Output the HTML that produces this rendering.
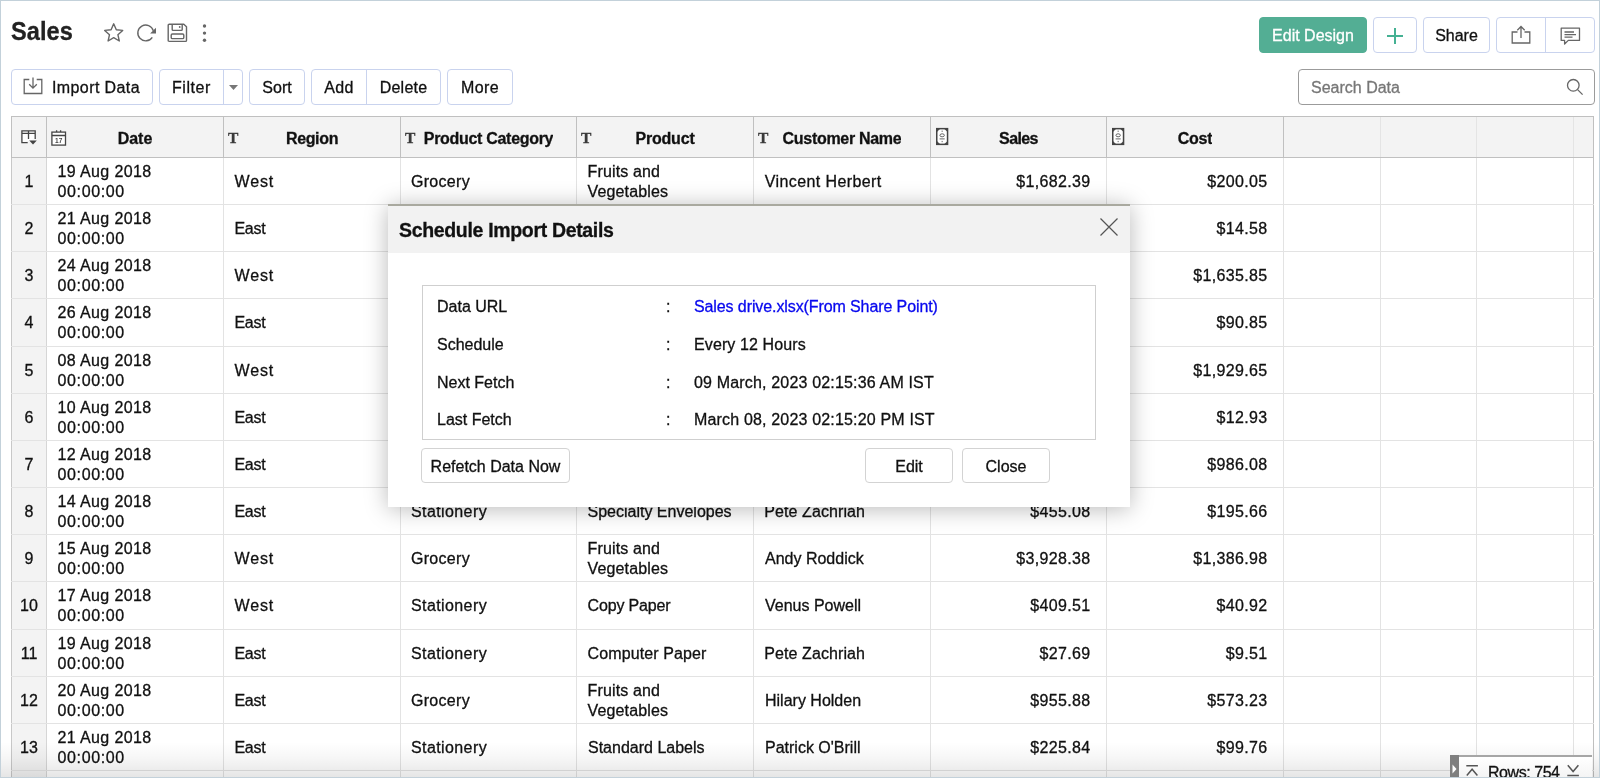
<!DOCTYPE html>
<html lang="en">
<head>
<meta charset="utf-8">
<title>Sales</title>
<style>
*{box-sizing:border-box;margin:0;padding:0}
html,body{width:1600px;height:778px;overflow:hidden;background:#fff}
body{position:relative;will-change:transform;-webkit-text-stroke:.3px;font-family:"Liberation Sans",Arial,sans-serif;font-size:16px;color:#111;line-height:20px}
#frame{position:absolute;left:0;top:0;width:1600px;height:778px;border:1px solid #c3d1da;pointer-events:none;z-index:50}
.abs{position:absolute}
h1{position:absolute;left:11px;top:15px;font-size:26.5px;line-height:32px;font-weight:bold;color:#222;transform:scaleX(.89);transform-origin:1px 0}
.btn{position:absolute;height:36px;border:1px solid #c9d3ee;border-radius:4px;background:#fff;color:#111;font-size:16px;line-height:36px;text-align:center;white-space:nowrap}
.btn.green{background:#53ae94;border-color:#53ae94;color:#fff}
svg{position:absolute;overflow:visible}
#search{position:absolute;left:1298px;top:69px;width:297px;height:36px;border:1px solid #9b9b9b;border-radius:4px;color:#777;line-height:36px;padding-left:12px}
/* table */
#grid{position:absolute;left:11px;top:116px;width:1583px;height:662px;overflow:hidden}
#head{position:absolute;left:0;top:0;width:1583px;height:42px;background:#f3f3f3;border:1px solid #c0c0c0;display:grid;grid-template-columns:35px 177px 177px 176px 177px 177px 176px 177px 97px 96px 97px 19px}
.h{position:relative;height:40px;border-right:1px solid #c0c0c0;font-weight:bold;text-align:center;line-height:40px;white-space:nowrap;overflow:hidden}
.h .t{position:absolute;left:4px;top:1px;font:bold 15.5px/40px "Liberation Serif",serif;color:#3a3a3a;font-style:normal}
.h.e{border-right-color:#e4e4e4}
.h.z{border-right:0}
.h b{display:inline-block;max-width:130px;overflow:hidden;vertical-align:top;padding-top:2px;height:40px}
.row{position:absolute;left:0;width:1583px;display:grid;grid-template-columns:36px 177px 177px 176px 177px 177px 176px 177px 97px 96px 97px 20px;border-bottom:1px solid #e3e3e3}
.c{border-right:1px solid #e3e3e3;padding:1px 16px 0 11px;display:flex;align-items:center;white-space:nowrap;overflow:hidden}
.c.n{background:#f3f3f3;justify-content:center;padding:1px 0 0 0;border-left:1px solid #c8c8c8;border-right-color:#d6d6d6}
.c.r{justify-content:flex-end;letter-spacing:.36px;padding-right:15.4px}
.c.d{white-space:normal;letter-spacing:.36px;padding-left:10.6px}
.c.d u{text-decoration:none;letter-spacing:.6px}
.c.z{border-right-color:#c0c0c0;padding:0}
/* modal */
#modal{position:absolute;left:388px;top:204px;width:742px;height:303px;background:#fff;border-top:2px solid #a9a99f;box-shadow:0 2px 22px rgba(0,0,0,.28);z-index:20}
#mhead{position:absolute;left:0;top:0;width:742px;height:47px;background:#f2f2f2}
#mhead b{position:absolute;left:11px;top:12px;font-size:19.5px;line-height:24px;color:#111;letter-spacing:-.33px}
#mbox{position:absolute;left:34px;top:79px;width:674px;height:155px;border:1px solid #cfcfcf}
.l{position:absolute;left:14px;white-space:nowrap}
.k{position:absolute;left:243px}
.v{position:absolute;left:271px;white-space:nowrap}
.mb{position:absolute;height:35px;border:1px solid #d3d3d3;border-radius:4px;background:#fff;text-align:center;line-height:36px;top:242px;white-space:nowrap}
</style>
</head>
<body>
<h1>Sales</h1>

<!-- title icons -->
<svg style="left:103px;top:22px" width="22" height="22" viewBox="0 0 22 22" fill="none" stroke="#666" stroke-width="1.4" stroke-linejoin="round"><path d="M10.7 1.8l2.6 6 6.4.6-4.8 4.3 1.4 6.3-5.6-3.3-5.6 3.3 1.4-6.3L1.7 8.4l6.4-.6z"/></svg>
<svg style="left:136px;top:23px" width="22" height="20" viewBox="0 0 22 20" fill="none" stroke="#666" stroke-width="1.4"><path d="M17.3 7.7A7.9 7.9 0 1 0 16.3 14.3"/><path d="M20 4.7v5.9h-5.9z" fill="#666" stroke="none"/></svg>
<svg style="left:167px;top:23px" width="21" height="20" viewBox="0 0 21 20" fill="none" stroke="#666" stroke-width="1.4" stroke-linejoin="round"><path d="M2.2 1.2h14.6l2.7 2.6v13.6a1 1 0 0 1-1 1H2.2a1 1 0 0 1-1-1V2.2a1 1 0 0 1 1-1z"/><path d="M5.2 1.4v5.2a.8.8 0 0 0 .8.8h8.4a.8.8 0 0 0 .8-.8V1.4"/><rect x="4.2" y="11" width="12.6" height="4.6" rx="1.2"/><circle cx="12.7" cy="4" r=".9" fill="#666" stroke="none"/></svg>
<svg style="left:201px;top:23px" width="8" height="20" viewBox="0 0 8 20" fill="#666"><circle cx="3.5" cy="3" r="1.7"/><circle cx="3.5" cy="10.1" r="1.7"/><circle cx="3.5" cy="17.2" r="1.7"/></svg>

<!-- top right buttons -->
<div class="btn green" style="left:1259px;top:17px;width:108px">Edit Design</div>
<div class="btn" style="left:1373px;top:17px;width:44px"></div>
<svg style="left:1385px;top:26px" width="20" height="20" viewBox="0 0 20 20" stroke="#45b193" stroke-width="2" fill="none"><path d="M10 2v16M2 10h16"/></svg>
<div class="btn" style="left:1423px;top:17px;width:67px">Share</div>
<div class="btn" style="left:1496px;top:17px;width:99px"></div>
<div class="abs" style="left:1545px;top:18px;width:1px;height:34px;background:#c9d3ee"></div>
<svg style="left:1511px;top:25px" width="20" height="20" viewBox="0 0 20 20" fill="none" stroke="#666" stroke-width="1.3"><path d="M6.5 7H1.2v11h17.6V7h-5.3"/><path d="M10 13V1.5M6.3 5.2L10 1.5l3.7 3.7"/></svg>
<svg style="left:1560px;top:27px" width="21" height="20" viewBox="0 0 21 20" fill="none" stroke="#666" stroke-width="1.3" stroke-linejoin="round"><path d="M1.2 1.2h18.3v12.2H8.3L4.6 17v-3.6H1.2z"/><path d="M4.5 5h9.5M4.5 7.6h11.5M4.5 10.2h8"/></svg>

<!-- toolbar -->
<div class="btn" style="left:11px;top:69px;width:142px;text-align:left;padding-left:40px;letter-spacing:.4px">Import Data</div>
<svg style="left:23px;top:77px" width="20" height="18" viewBox="0 0 20 18" fill="none" stroke="#666" stroke-width="1.3"><path d="M6.3 2.5H1.2v14h17.6v-14h-5.1"/><path d="M10 .5v10.5M6.2 7.3l3.8 3.8 3.8-3.8"/></svg>
<div class="btn" style="left:159px;top:69px;width:84px;text-align:left;padding-left:12px;letter-spacing:.55px">Filter</div>
<div class="abs" style="left:223px;top:70px;width:1px;height:34px;background:#c9d3ee"></div>
<svg style="left:228.5px;top:85px" width="9" height="5" viewBox="0 0 9 5" fill="#777"><path d="M0 0h9L4.5 5z"/></svg>
<div class="btn" style="left:249px;top:69px;width:56px">Sort</div>
<div class="btn" style="left:311px;top:69px;width:130px"></div>
<div class="abs" style="left:366px;top:70px;width:1px;height:34px;background:#c9d3ee"></div>
<div class="abs" style="left:312px;top:70px;width:54px;line-height:36px;text-align:center;letter-spacing:.3px">Add</div>
<div class="abs" style="left:367px;top:70px;width:73px;line-height:36px;text-align:center;letter-spacing:.25px">Delete</div>
<div class="btn" style="left:447px;top:69px;width:66px;letter-spacing:.4px">More</div>
<div id="search">Search Data</div>
<svg style="left:1566px;top:78px" width="18" height="18" viewBox="0 0 18 18" fill="none" stroke="#666" stroke-width="1.3"><circle cx="7.3" cy="7.3" r="5.8"/><path d="M11.6 11.6l5 5"/></svg>

<!-- grid -->
<div id="grid">
<div id="head">
<div class="h"><svg style="left:9px;top:13px" width="17" height="16" viewBox="0 0 17 16" fill="none" stroke="#444" stroke-width="1.3"><path d="M.9 12.7V.9h13.3v8.2M.9 3.3h13.3M7.5.9v8.2M.3 12.7h6.4" fill="#fff"/><path d="M8.2 10.5h7.6l-3.8 4z" fill="#444" stroke="none"/></svg></div>
<div class="h"><svg style="left:4px;top:13px" width="16" height="16" viewBox="0 0 16 16" fill="none" stroke="#444" stroke-width="1.3"><rect x=".9" y="2.1" width="13.6" height="13" fill="#fff"/><path d="M.9 5.5h13.6M5.6.3v1.8M9.6.3v1.8"/><text x="7.7" y="12.8" style="font:bold 6.5px 'Liberation Sans',sans-serif" text-anchor="middle" fill="#444" stroke="none">17</text></svg><b>Date</b></div>
<div class="h"><i class="t">T</i><b style="letter-spacing:-.35px">Region</b></div>
<div class="h"><i class="t">T</i><b style="letter-spacing:-.3px">Product Category</b></div>
<div class="h"><i class="t">T</i><b style="letter-spacing:-.2px">Product</b></div>
<div class="h"><i class="t">T</i><b style="letter-spacing:-.3px">Customer Name</b></div>
<div class="h"><svg style="left:5px;top:11px" width="13" height="17" viewBox="0 0 13 17" fill="none" stroke="#444"><rect x=".75" y=".65" width="10.8" height="15.7" fill="#fff" stroke-width="1.5"/><path d="M.8.7h3L.8 3.7zM11.5.7h-3l3 3zM.8 16.3h3l-3-3zM11.5 16.3h-3l3-3z" fill="#444" stroke-width=".6"/><ellipse cx="6.15" cy="7.3" rx="2.2" ry="1.5" stroke-width=".9" stroke="#555"/><path d="M3.6 10.9h5.1" stroke-width="1" stroke="#666"/><path d="M6.15 2.6v1.3M6.15 12.9v1.3" stroke-width="1" stroke="#666"/></svg><b style="letter-spacing:-.6px">Sales</b></div>
<div class="h"><svg style="left:5px;top:11px" width="13" height="17" viewBox="0 0 13 17" fill="none" stroke="#444"><rect x=".75" y=".65" width="10.8" height="15.7" fill="#fff" stroke-width="1.5"/><path d="M.8.7h3L.8 3.7zM11.5.7h-3l3 3zM.8 16.3h3l-3-3zM11.5 16.3h-3l3-3z" fill="#444" stroke-width=".6"/><ellipse cx="6.15" cy="7.3" rx="2.2" ry="1.5" stroke-width=".9" stroke="#555"/><path d="M3.6 10.9h5.1" stroke-width="1" stroke="#666"/><path d="M6.15 2.6v1.3M6.15 12.9v1.3" stroke-width="1" stroke="#666"/></svg><b style="letter-spacing:-.3px">Cost</b></div>
<div class="h e"></div>
<div class="h e"></div>
<div class="h e"></div>
<div class="h z"></div>
</div>
<div class="row" style="top:42px;height:47px"><div class="c n">1</div><div class="c d"><span>19 Aug 2018<br><u>00:00:00</u></span></div><div class="c"><span style="letter-spacing:0.85px;margin-left:-0.5px">West</span></div><div class="c"><span style="letter-spacing:0.3px;margin-left:-1px">Grocery</span></div><div class="c"><span style="letter-spacing:0.15px;margin-left:-0.5px">Fruits and<br>Vegetables</span></div><div class="c"><span style="letter-spacing:0.4px;margin-left:-0.3px">Vincent Herbert</span></div><div class="c r">$1,682.39</div><div class="c r">$200.05</div><div class="c"></div><div class="c"></div><div class="c"></div><div class="c z"></div></div>
<div class="row" style="top:89px;height:47px"><div class="c n">2</div><div class="c d"><span>21 Aug 2018<br><u>00:00:00</u></span></div><div class="c"><span style="letter-spacing:-0.3px;margin-left:-0.5px">East</span></div><div class="c"><span style="letter-spacing:0.4px;margin-left:-1px">Stationery</span></div><div class="c"><span style="letter-spacing:-0.15px;margin-left:-0.5px">Copy Paper</span></div><div class="c"><span>Maria Bertelson</span></div><div class="c r">$52.01</div><div class="c r">$14.58</div><div class="c"></div><div class="c"></div><div class="c"></div><div class="c z"></div></div>
<div class="row" style="top:136px;height:47px"><div class="c n">3</div><div class="c d"><span>24 Aug 2018<br><u>00:00:00</u></span></div><div class="c"><span style="letter-spacing:0.85px;margin-left:-0.5px">West</span></div><div class="c"><span style="letter-spacing:0.3px;margin-left:-1px">Grocery</span></div><div class="c"><span style="letter-spacing:0.15px;margin-left:-0.5px">Fruits and<br>Vegetables</span></div><div class="c"><span>Susan Pistek</span></div><div class="c r">$4,521.22</div><div class="c r">$1,635.85</div><div class="c"></div><div class="c"></div><div class="c"></div><div class="c z"></div></div>
<div class="row" style="top:183px;height:48px"><div class="c n">4</div><div class="c d"><span>26 Aug 2018<br><u>00:00:00</u></span></div><div class="c"><span style="letter-spacing:-0.3px;margin-left:-0.5px">East</span></div><div class="c"><span style="letter-spacing:0.4px;margin-left:-1px">Stationery</span></div><div class="c"><span>Standard Labels</span></div><div class="c"><span>Ruben Dartt</span></div><div class="c r">$211.15</div><div class="c r">$90.85</div><div class="c"></div><div class="c"></div><div class="c"></div><div class="c z"></div></div>
<div class="row" style="top:231px;height:47px"><div class="c n">5</div><div class="c d"><span>08 Aug 2018<br><u>00:00:00</u></span></div><div class="c"><span style="letter-spacing:0.85px;margin-left:-0.5px">West</span></div><div class="c"><span style="letter-spacing:0.3px;margin-left:-1px">Grocery</span></div><div class="c"><span style="letter-spacing:0.15px;margin-left:-0.5px">Fruits and<br>Vegetables</span></div><div class="c"><span>Joy Smith</span></div><div class="c r">$5,035.52</div><div class="c r">$1,929.65</div><div class="c"></div><div class="c"></div><div class="c"></div><div class="c z"></div></div>
<div class="row" style="top:278px;height:47px"><div class="c n">6</div><div class="c d"><span>10 Aug 2018<br><u>00:00:00</u></span></div><div class="c"><span style="letter-spacing:-0.3px;margin-left:-0.5px">East</span></div><div class="c"><span style="letter-spacing:0.4px;margin-left:-1px">Stationery</span></div><div class="c"><span style="letter-spacing:-0.15px;margin-left:-0.5px">Copy Paper</span></div><div class="c"><span>Dean Percer</span></div><div class="c r">$39.21</div><div class="c r">$12.93</div><div class="c"></div><div class="c"></div><div class="c"></div><div class="c z"></div></div>
<div class="row" style="top:325px;height:47px"><div class="c n">7</div><div class="c d"><span>12 Aug 2018<br><u>00:00:00</u></span></div><div class="c"><span style="letter-spacing:-0.3px;margin-left:-0.5px">East</span></div><div class="c"><span style="letter-spacing:0.3px;margin-left:-1px">Grocery</span></div><div class="c"><span style="letter-spacing:0.15px;margin-left:-0.5px">Fruits and<br>Vegetables</span></div><div class="c"><span>Alan Dominguez</span></div><div class="c r">$2,319.50</div><div class="c r">$986.08</div><div class="c"></div><div class="c"></div><div class="c"></div><div class="c z"></div></div>
<div class="row" style="top:372px;height:47px"><div class="c n">8</div><div class="c d"><span>14 Aug 2018<br><u>00:00:00</u></span></div><div class="c"><span style="letter-spacing:-0.3px;margin-left:-0.5px">East</span></div><div class="c"><span style="letter-spacing:0.4px;margin-left:-1px">Stationery</span></div><div class="c"><span style="letter-spacing:0px;margin-left:-0.5px">Specialty Envelopes</span></div><div class="c"><span style="letter-spacing:0.1px;margin-left:-0.8px">Pete Zachriah</span></div><div class="c r">$455.08</div><div class="c r">$195.66</div><div class="c"></div><div class="c"></div><div class="c"></div><div class="c z"></div></div>
<div class="row" style="top:419px;height:47px"><div class="c n">9</div><div class="c d"><span>15 Aug 2018<br><u>00:00:00</u></span></div><div class="c"><span style="letter-spacing:0.85px;margin-left:-0.5px">West</span></div><div class="c"><span style="letter-spacing:0.3px;margin-left:-1px">Grocery</span></div><div class="c"><span style="letter-spacing:0.15px;margin-left:-0.5px">Fruits and<br>Vegetables</span></div><div class="c"><span>Andy Roddick</span></div><div class="c r">$3,928.38</div><div class="c r">$1,386.98</div><div class="c"></div><div class="c"></div><div class="c"></div><div class="c z"></div></div>
<div class="row" style="top:466px;height:48px"><div class="c n">10</div><div class="c d"><span>17 Aug 2018<br><u>00:00:00</u></span></div><div class="c"><span style="letter-spacing:0.85px;margin-left:-0.5px">West</span></div><div class="c"><span style="letter-spacing:0.4px;margin-left:-1px">Stationery</span></div><div class="c"><span style="letter-spacing:-0.15px;margin-left:-0.5px">Copy Paper</span></div><div class="c"><span>Venus Powell</span></div><div class="c r">$409.51</div><div class="c r">$40.92</div><div class="c"></div><div class="c"></div><div class="c"></div><div class="c z"></div></div>
<div class="row" style="top:514px;height:47px"><div class="c n">11</div><div class="c d"><span>19 Aug 2018<br><u>00:00:00</u></span></div><div class="c"><span style="letter-spacing:-0.3px;margin-left:-0.5px">East</span></div><div class="c"><span style="letter-spacing:0.4px;margin-left:-1px">Stationery</span></div><div class="c"><span style="letter-spacing:0.12px;margin-left:-0.5px">Computer Paper</span></div><div class="c"><span style="letter-spacing:0.1px;margin-left:-0.8px">Pete Zachriah</span></div><div class="c r">$27.69</div><div class="c r">$9.51</div><div class="c"></div><div class="c"></div><div class="c"></div><div class="c z"></div></div>
<div class="row" style="top:561px;height:47px"><div class="c n">12</div><div class="c d"><span>20 Aug 2018<br><u>00:00:00</u></span></div><div class="c"><span style="letter-spacing:-0.3px;margin-left:-0.5px">East</span></div><div class="c"><span style="letter-spacing:0.3px;margin-left:-1px">Grocery</span></div><div class="c"><span style="letter-spacing:0.15px;margin-left:-0.5px">Fruits and<br>Vegetables</span></div><div class="c"><span>Hilary Holden</span></div><div class="c r">$955.88</div><div class="c r">$573.23</div><div class="c"></div><div class="c"></div><div class="c"></div><div class="c z"></div></div>
<div class="row" style="top:608px;height:47px"><div class="c n">13</div><div class="c d"><span>21 Aug 2018<br><u>00:00:00</u></span></div><div class="c"><span style="letter-spacing:-0.3px;margin-left:-0.5px">East</span></div><div class="c"><span style="letter-spacing:0.4px;margin-left:-1px">Stationery</span></div><div class="c"><span>Standard Labels</span></div><div class="c"><span>Patrick O'Brill</span></div><div class="c r">$225.84</div><div class="c r">$99.76</div><div class="c"></div><div class="c"></div><div class="c"></div><div class="c z"></div></div>
<div class="row" style="top:655px;height:47px"><div class="c n"></div><div class="c"></div><div class="c"></div><div class="c"></div><div class="c"></div><div class="c"></div><div class="c"></div><div class="c"></div><div class="c"></div><div class="c"></div><div class="c"></div><div class="c z"></div></div>
</div>

<!-- modal -->
<div id="modal">
<div id="mhead"><b>Schedule Import Details</b></div>
<svg style="left:711px;top:10.7px" width="20" height="20" viewBox="0 0 20 20" stroke="#555" stroke-width="1.2" fill="none"><path d="M1.5 1.5l17 17M18.5 1.5l-17 17"/></svg>
<div id="mbox">
<div class="l" style="top:11px">Data URL</div><div class="k" style="top:11px">:</div><div class="v" style="top:11px;color:#0808ee;letter-spacing:-.1px">Sales drive.xlsx(From Share Point)</div>
<div class="l" style="top:49px">Schedule</div><div class="k" style="top:49px">:</div><div class="v" style="top:49px;letter-spacing:.11px">Every 12 Hours</div>
<div class="l" style="top:87px">Next Fetch</div><div class="k" style="top:87px">:</div><div class="v" style="top:87px;letter-spacing:.17px">09 March, 2023 02:15:36 AM IST</div>
<div class="l" style="top:124px">Last Fetch</div><div class="k" style="top:124px">:</div><div class="v" style="top:124px;letter-spacing:.17px">March 08, 2023 02:15:20 PM IST</div>
</div>
<div class="mb" style="left:33px;width:149px">Refetch Data Now</div>
<div class="mb" style="left:477px;width:88px">Edit</div>
<div class="mb" style="left:574px;width:88px">Close</div>
</div>

<!-- rows status -->
<div class="abs" style="left:1px;top:742px;width:1598px;height:36px;background:linear-gradient(to bottom,rgba(0,0,0,0),rgba(0,0,0,.035) 45%,rgba(0,0,0,.1));z-index:4"></div>
<div class="abs" style="left:1450px;top:755px;width:142px;height:23px;background:linear-gradient(to bottom,#fff,#f4f4f4);border-top:2px solid #a6a6a6;z-index:5"></div>
<div class="abs" style="left:1450px;top:755px;width:9px;height:23px;background:#7f7f7f;z-index:6"></div>
<svg style="left:1452px;top:764px;z-index:7" width="5" height="10" viewBox="0 0 5 10" fill="#fff"><path d="M.5.5l4 4.5-4 4.5z"/></svg>
<svg style="left:1466px;top:765px;z-index:7" width="13" height="13" viewBox="0 0 13 13" fill="none" stroke="#555" stroke-width="1.5"><path d="M.3.8h11.6M.8 10.5l5.3-6.3 5.3 6.3"/></svg>
<div class="abs" style="left:1488px;top:763px;z-index:6;white-space:nowrap;letter-spacing:-.45px">Rows: 754</div>
<svg style="left:1567px;top:765px;z-index:7" width="13" height="13" viewBox="0 0 13 13" fill="none" stroke="#555" stroke-width="1.5"><path d="M.8.3l5.3 6.3L11.4.3M.3 10.6h11.6"/></svg>
<div id="frame"></div>
</body>
</html>
